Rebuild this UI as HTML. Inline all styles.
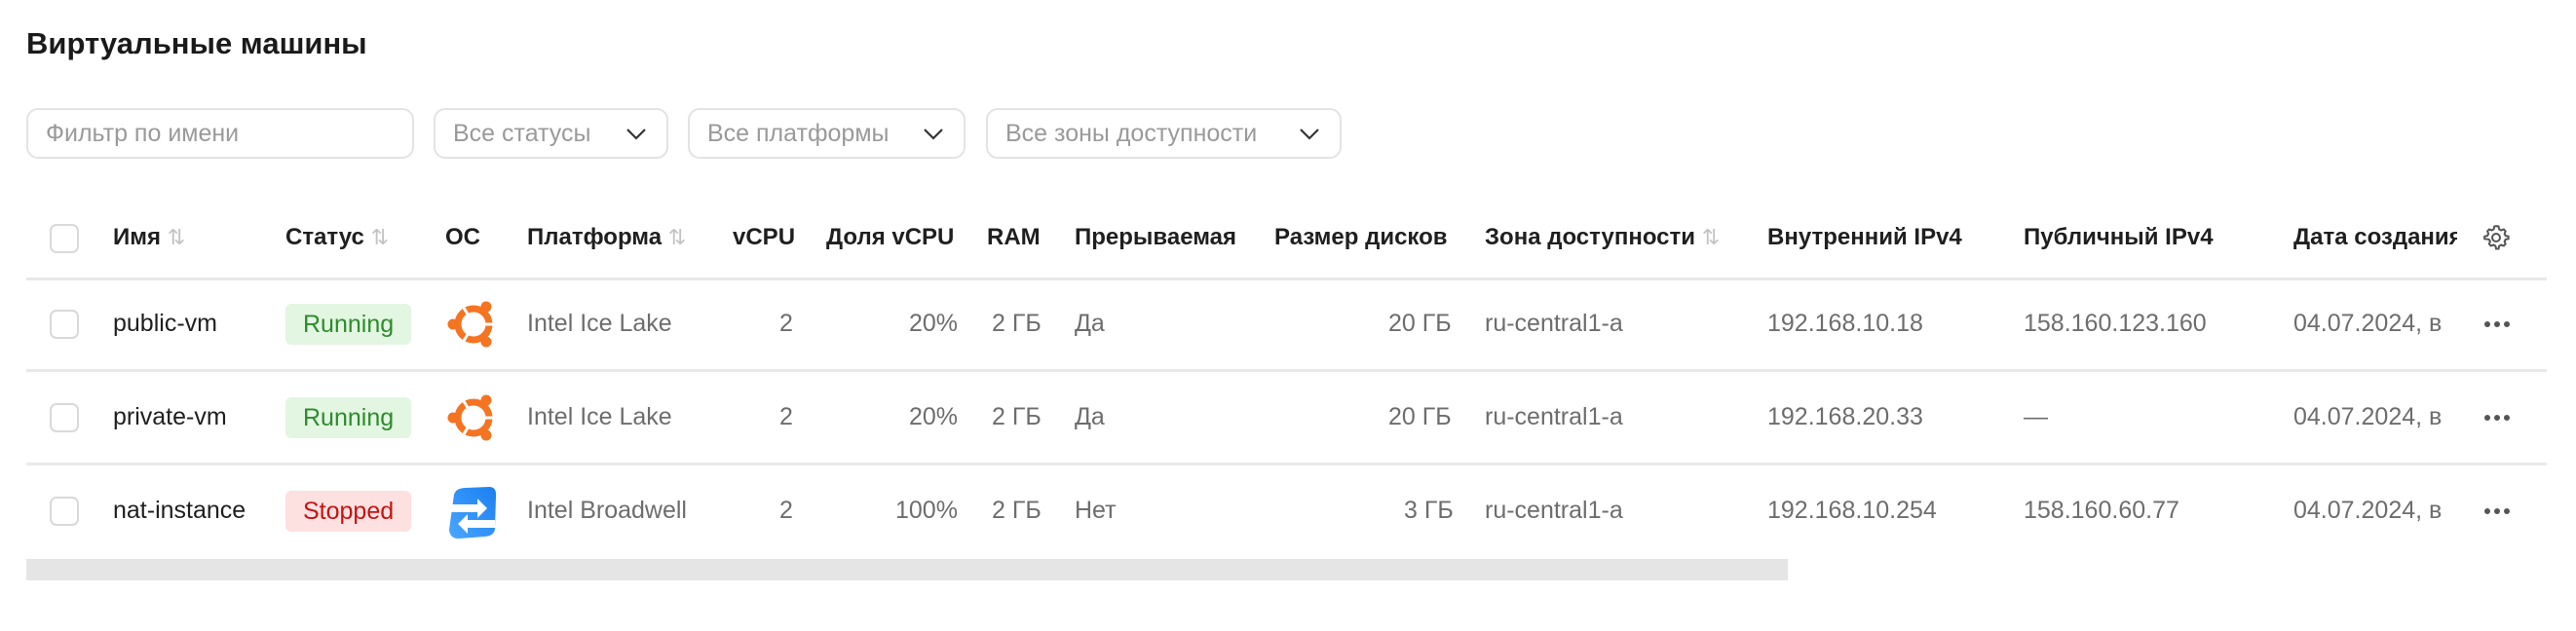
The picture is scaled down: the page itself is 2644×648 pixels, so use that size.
<!DOCTYPE html><html><head><meta charset="utf-8"><style>
body{margin:0;width:2644px;height:648px;background:#fff;font-family:"Liberation Sans",sans-serif;position:relative;overflow:hidden;color:#222}
.a{position:absolute;white-space:nowrap}
h1{position:absolute;left:27px;top:27px;margin:0;font-size:31px;font-weight:bold;color:#1a1a1a}
.inp{position:absolute;top:111px;height:52px;border:2px solid #e3e3e3;border-radius:12px;box-sizing:border-box;font-size:25px;color:#9a9a9a;line-height:48px;padding-left:18px}
.chev{position:absolute;right:20px;top:14px}
.hd{font-size:24px;font-weight:bold;color:#1f1f1f;top:230px}
.line{position:absolute;left:27px;width:2587px;height:3px;background:#e8e8e8}
.cb{position:absolute;left:51px;width:30px;height:30px;border:2px solid #d9d9d9;border-radius:7px;box-sizing:border-box}
.t{font-size:25px;color:#6d6d6d}
.n{font-size:25px;color:#1f1f1f}
.badge{position:absolute;left:293px;height:42px;border-radius:6px;font-size:25px;line-height:42px;padding:0 18px}
.run{background:#e2f6e1;color:#2e8b2e}
.stop{background:#fde0e0;color:#c41414}
.sort{color:#c3c3c3;font-weight:normal;font-size:22px}
.dots{position:absolute;left:2550px}
.dots i{display:inline-block;width:6px;height:6px;border-radius:3px;background:#555;margin-right:4px}
</style></head><body>
<h1>Виртуальные машины</h1>
<div class="inp" style="left:27px;width:398px">Фильтр по имени</div>
<div class="inp" style="left:445px;width:241px">Все статусы<svg class="chev" width="22" height="20"><path d="M2 6l9 9 9-9" fill="none" stroke="#333" stroke-width="2.2"/></svg></div>
<div class="inp" style="left:706px;width:285px">Все платформы<svg class="chev" width="22" height="20"><path d="M2 6l9 9 9-9" fill="none" stroke="#333" stroke-width="2.2"/></svg></div>
<div class="inp" style="left:1012px;width:365px">Все зоны доступности<svg class="chev" width="22" height="20"><path d="M2 6l9 9 9-9" fill="none" stroke="#333" stroke-width="2.2"/></svg></div>

<div class="cb" style="top:230px"></div>
<div class="a hd" style="left:116px">Имя <span class="sort">⇅</span></div>
<div class="a hd" style="left:293px">Статус <span class="sort">⇅</span></div>
<div class="a hd" style="left:457px">ОС</div>
<div class="a hd" style="left:541px">Платформа <span class="sort">⇅</span></div>
<div class="a hd" style="left:752px">vCPU</div>
<div class="a hd" style="left:848px">Доля vCPU</div>
<div class="a hd" style="left:1013px">RAM</div>
<div class="a hd" style="left:1103px">Прерываемая</div>
<div class="a hd" style="left:1308px">Размер дисков</div>
<div class="a hd" style="left:1524px">Зона доступности <span class="sort">⇅</span></div>
<div class="a hd" style="left:1814px">Внутренний IPv4</div>
<div class="a hd" style="left:2077px">Публичный IPv4</div>
<div class="a hd" style="left:2354px;width:168px;overflow:hidden">Дата создания</div>
<svg class="a" style="left:2547px;top:229px" width="30" height="30" viewBox="0 0 24 24"><path d="M12 2.5l2 .3.5 2.3 1.6.9 2.2-.8 1.4 1.5-.8 2.2.9 1.6 2.3.5v2l-2.3.5-.9 1.6.8 2.2-1.4 1.5-2.2-.8-1.6.9-.5 2.3h-2l-.5-2.3-1.6-.9-2.2.8-1.4-1.5.8-2.2-.9-1.6L2.5 13v-2l2.3-.5.9-1.6-.8-2.2 1.4-1.5 2.2.8 1.6-.9.5-2.3z" fill="none" stroke="#555" stroke-width="1.6"/><circle cx="12" cy="12" r="3.2" fill="none" stroke="#555" stroke-width="1.6"/></svg>
<div class="line" style="top:285px"></div>
<div class="line" style="top:379px"></div>
<div class="line" style="top:475px"></div>

<!-- rows -->
<div class="cb" style="top:318px"></div>
<div class="a n" style="left:116px;top:318px">public-vm</div>
<div class="badge run" style="top:312px">Running</div>
<svg class="a" style="left:458px;top:309px" width="52" height="50" viewBox="0 0 52 50"><circle cx="28" cy="24" r="16" fill="none" stroke="#f47421" stroke-width="7"/><path d="M36 24h12M24 31l-6 10M24 17l-6-10" stroke="#fff" stroke-width="3"/><circle cx="41" cy="6" r="5.5" fill="#f47421"/><circle cx="7" cy="24" r="5.5" fill="#f47421"/><circle cx="41" cy="42" r="5.5" fill="#f47421"/></svg>
<div class="a t" style="left:541px;top:318px">Intel Ice Lake</div>
<div class="a t" style="left:800px;top:318px">2</div>
<div class="a t" style="left:933px;top:318px">20%</div>
<div class="a t" style="left:1018px;top:318px">2 ГБ</div>
<div class="a t" style="left:1103px;top:318px">Да</div>
<div class="a t" style="left:1425px;top:318px">20 ГБ</div>
<div class="a t" style="left:1524px;top:318px">ru-central1-a</div>
<div class="a t" style="left:1814px;top:318px">192.168.10.18</div>
<div class="a t" style="left:2077px;top:318px">158.160.123.160</div>
<div class="a t" style="left:2354px;top:318px">04.07.2024, в</div>
<div class="dots" style="top:323px"><i></i><i></i><i></i></div>

<div class="cb" style="top:414px"></div>
<div class="a n" style="left:116px;top:414px">private-vm</div>
<div class="badge run" style="top:408px">Running</div>
<svg class="a" style="left:458px;top:405px" width="52" height="50" viewBox="0 0 52 50"><circle cx="28" cy="24" r="16" fill="none" stroke="#f47421" stroke-width="7"/><path d="M36 24h12M24 31l-6 10M24 17l-6-10" stroke="#fff" stroke-width="3"/><circle cx="41" cy="6" r="5.5" fill="#f47421"/><circle cx="7" cy="24" r="5.5" fill="#f47421"/><circle cx="41" cy="42" r="5.5" fill="#f47421"/></svg>
<div class="a t" style="left:541px;top:414px">Intel Ice Lake</div>
<div class="a t" style="left:800px;top:414px">2</div>
<div class="a t" style="left:933px;top:414px">20%</div>
<div class="a t" style="left:1018px;top:414px">2 ГБ</div>
<div class="a t" style="left:1103px;top:414px">Да</div>
<div class="a t" style="left:1425px;top:414px">20 ГБ</div>
<div class="a t" style="left:1524px;top:414px">ru-central1-a</div>
<div class="a t" style="left:1814px;top:414px">192.168.20.33</div>
<div class="a t" style="left:2077px;top:414px">—</div>
<div class="a t" style="left:2354px;top:414px">04.07.2024, в</div>
<div class="dots" style="top:419px"><i></i><i></i><i></i></div>

<div class="cb" style="top:510px"></div>
<div class="a n" style="left:116px;top:510px">nat-instance</div>
<div class="badge stop" style="top:504px">Stopped</div>
<svg class="a" style="left:458px;top:500px" width="54" height="54" viewBox="0 0 54 54"><defs><linearGradient id="g" x1="0" y1="1" x2="1" y2="0"><stop offset="0" stop-color="#4aa6ff"/><stop offset="1" stop-color="#1a7ff0"/></linearGradient></defs><path d="M8 8 Q10 1 20 1 L44 0 Q52 0 51 10 L50 42 Q50 50 40 51 L14 53 Q4 54 3 44 Z" fill="url(#g)"/><path d="M4 18h28v-6l10 10-10 10v-6H4z" fill="#fff"/><path d="M50 34H22v-6L12 38l10 10v-6h28z" fill="#fff"/></svg>
<div class="a t" style="left:541px;top:510px">Intel Broadwell</div>
<div class="a t" style="left:800px;top:510px">2</div>
<div class="a t" style="left:919px;top:510px">100%</div>
<div class="a t" style="left:1018px;top:510px">2 ГБ</div>
<div class="a t" style="left:1103px;top:510px">Нет</div>
<div class="a t" style="left:1441px;top:510px">3 ГБ</div>
<div class="a t" style="left:1524px;top:510px">ru-central1-a</div>
<div class="a t" style="left:1814px;top:510px">192.168.10.254</div>
<div class="a t" style="left:2077px;top:510px">158.160.60.77</div>
<div class="a t" style="left:2354px;top:510px">04.07.2024, в</div>
<div class="dots" style="top:515px"><i></i><i></i><i></i></div>

<div class="a" style="left:27px;top:574px;width:1808px;height:22px;background:#e5e5e5"></div>
</body></html>
